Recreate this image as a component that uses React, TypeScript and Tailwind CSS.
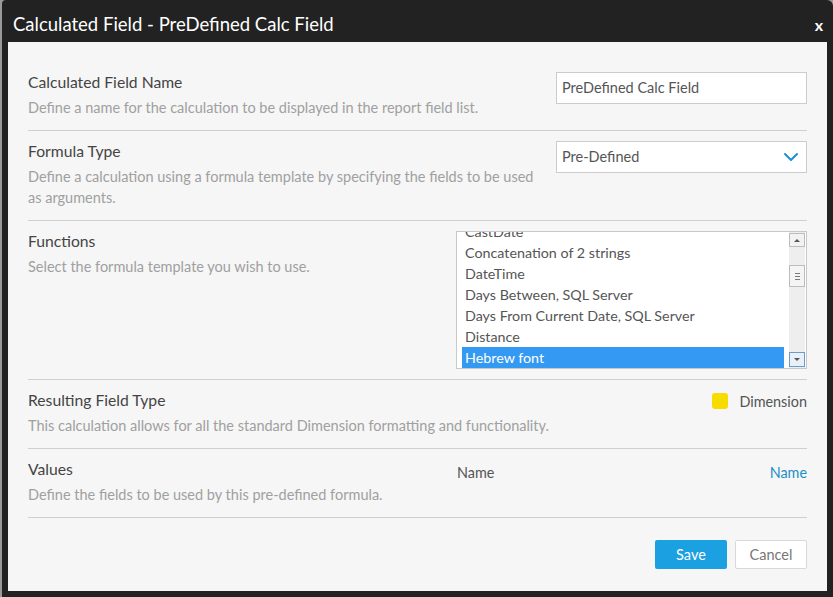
import { ChevronDown } from "lucide-react";

const FONT = "font-['Lato','Open_Sans',sans-serif]";

const functions = [
  "CastDate",
  "Concatenation of 2 strings",
  "DateTime",
  "Days Between, SQL Server",
  "Days From Current Date, SQL Server",
  "Distance",
  "Hebrew font",
];

function Row({
  label,
  desc,
  children,
  className = "",
}: {
  label: string;
  desc: React.ReactNode;
  children?: React.ReactNode;
  className?: string;
}) {
  return (
    <div className={`flex border-b border-[#cfcfcf] ${className}`}>
      <div className="flex-1">
        <div className="text-[15.7px] leading-[20px] text-[#444]">{label}</div>
        <div className="mt-[5px] text-[14.5px] leading-[21px] text-[#a0a0a0]">{desc}</div>
      </div>
      {children}
    </div>
  );
}

function FunctionList() {
  return (
    <div className="relative h-[138px] w-[351px] overflow-hidden border border-[#c8c8c8] bg-white">
      <div className="-mt-[11px] pl-[5px] pr-[22px]">
        {functions.map((f) => (
          <div
            key={f}
            className={`h-[21px] pl-[3px] text-[14.3px] leading-[21px] ${
              f === "Hebrew font" ? "bg-[#3399f3] text-white" : "text-[#555]"
            }`}
          >
            {f}
          </div>
        ))}
      </div>
      <div className="absolute right-[1px] top-0 flex h-full w-[16px] flex-col bg-[#eeeeee]">
        <div className="mt-[1px] flex h-[14px] items-center justify-center border border-[#bdbdbd] bg-[#f2f2f2]">
          <span className="h-0 w-0 border-x-[3px] border-b-[3px] border-x-transparent border-b-[#555]" />
        </div>
        <div className="mt-[18px] flex h-[22px] flex-col items-center justify-center gap-[2px] border border-[#bdbdbd] bg-[#f4f4f4]">
          <span className="h-px w-[5px] bg-[#777]" />
          <span className="h-px w-[5px] bg-[#777]" />
          <span className="h-px w-[5px] bg-[#777]" />
        </div>
        <div className="flex-1" />
        <div className="mb-[1px] flex h-[15px] items-center justify-center border border-[#6c9bd0] bg-[#e9f0f8]">
          <span className="h-0 w-0 border-x-[3px] border-t-[3px] border-x-transparent border-t-[#555]" />
        </div>
      </div>
    </div>
  );
}

export default function App() {
  return (
    <div className={`h-[597px] w-[833px] bg-[#9a9a9a] pl-[2px] ${FONT}`}>
      <div className="flex h-full flex-col rounded-tl-[4px] rounded-tr-[6px] bg-[#222] px-[6px] pb-[6px]">
        <div className="flex h-[42px] shrink-0 items-center justify-between pl-[5px] pr-[4px] pt-[7px]">
          <span className="text-[18.5px] text-white">Calculated Field - PreDefined Calc Field</span>
          <span className="text-[16px] font-bold text-white">x</span>
        </div>
        <div className="flex-1 bg-[#f6f6f6] px-[20px] pt-[30px]">
          <Row
            label="Calculated Field Name"
            desc="Define a name for the calculation to be displayed in the report field list."
            className="h-[59px]"
          >
            <div className="flex h-[32px] w-[251px] items-center border border-[#cccccc] bg-white px-[5px] text-[14.5px] text-[#555]">
              PreDefined Calc Field
            </div>
          </Row>
          <Row
            label="Formula Type"
            desc={
              <>
                Define a calculation using a formula template by specifying the fields to be used
                <br />
                as arguments.
              </>
            }
            className="h-[90px] pt-[10px]"
          >
            <div className="flex h-[32px] w-[251px] items-center justify-between border border-[#cccccc] bg-white pl-[5px] pr-[2px] text-[14.5px] text-[#555]">
              Pre-Defined
              <ChevronDown className="h-[24px] w-[26px] text-[#1e90d2]" strokeWidth={2} />
            </div>
          </Row>
          <Row label="Functions" desc="Select the formula template you wish to use." className="h-[159px] pt-[10px]">
            <FunctionList />
          </Row>
          <Row
            label="Resulting Field Type"
            desc="This calculation allows for all the standard Dimension formatting and functionality."
            className="h-[69px] pt-[10px]"
          >
            <div className="flex items-start gap-[11px] pt-[1px] text-[14.4px] text-[#555]">
              <span className="mt-[2px] h-[16px] w-[16px] rounded-[3px] bg-[#f8dc00]" />
              Dimension
            </div>
          </Row>
          <Row label="Values" desc="Define the fields to be used by this pre-defined formula." className="h-[69px] pt-[10px]">
            <div className="flex w-[350px] justify-between pt-[3px] text-[14.4px]">
              <span className="text-[#555]">Name</span>
              <span className="text-[#1f8ec9]">Name</span>
            </div>
          </Row>
          <div className="mt-[22px] flex justify-end gap-[8px]">
            <button className="h-[29px] w-[72px] rounded-[2px] bg-[#1ba0e2] text-[14.5px] text-white">Save</button>
            <button className="h-[29px] w-[72px] rounded-[2px] border border-[#d8d8d8] bg-white text-[14.5px] text-[#777]">
              Cancel
            </button>
          </div>
        </div>
      </div>
    </div>
  );
}
